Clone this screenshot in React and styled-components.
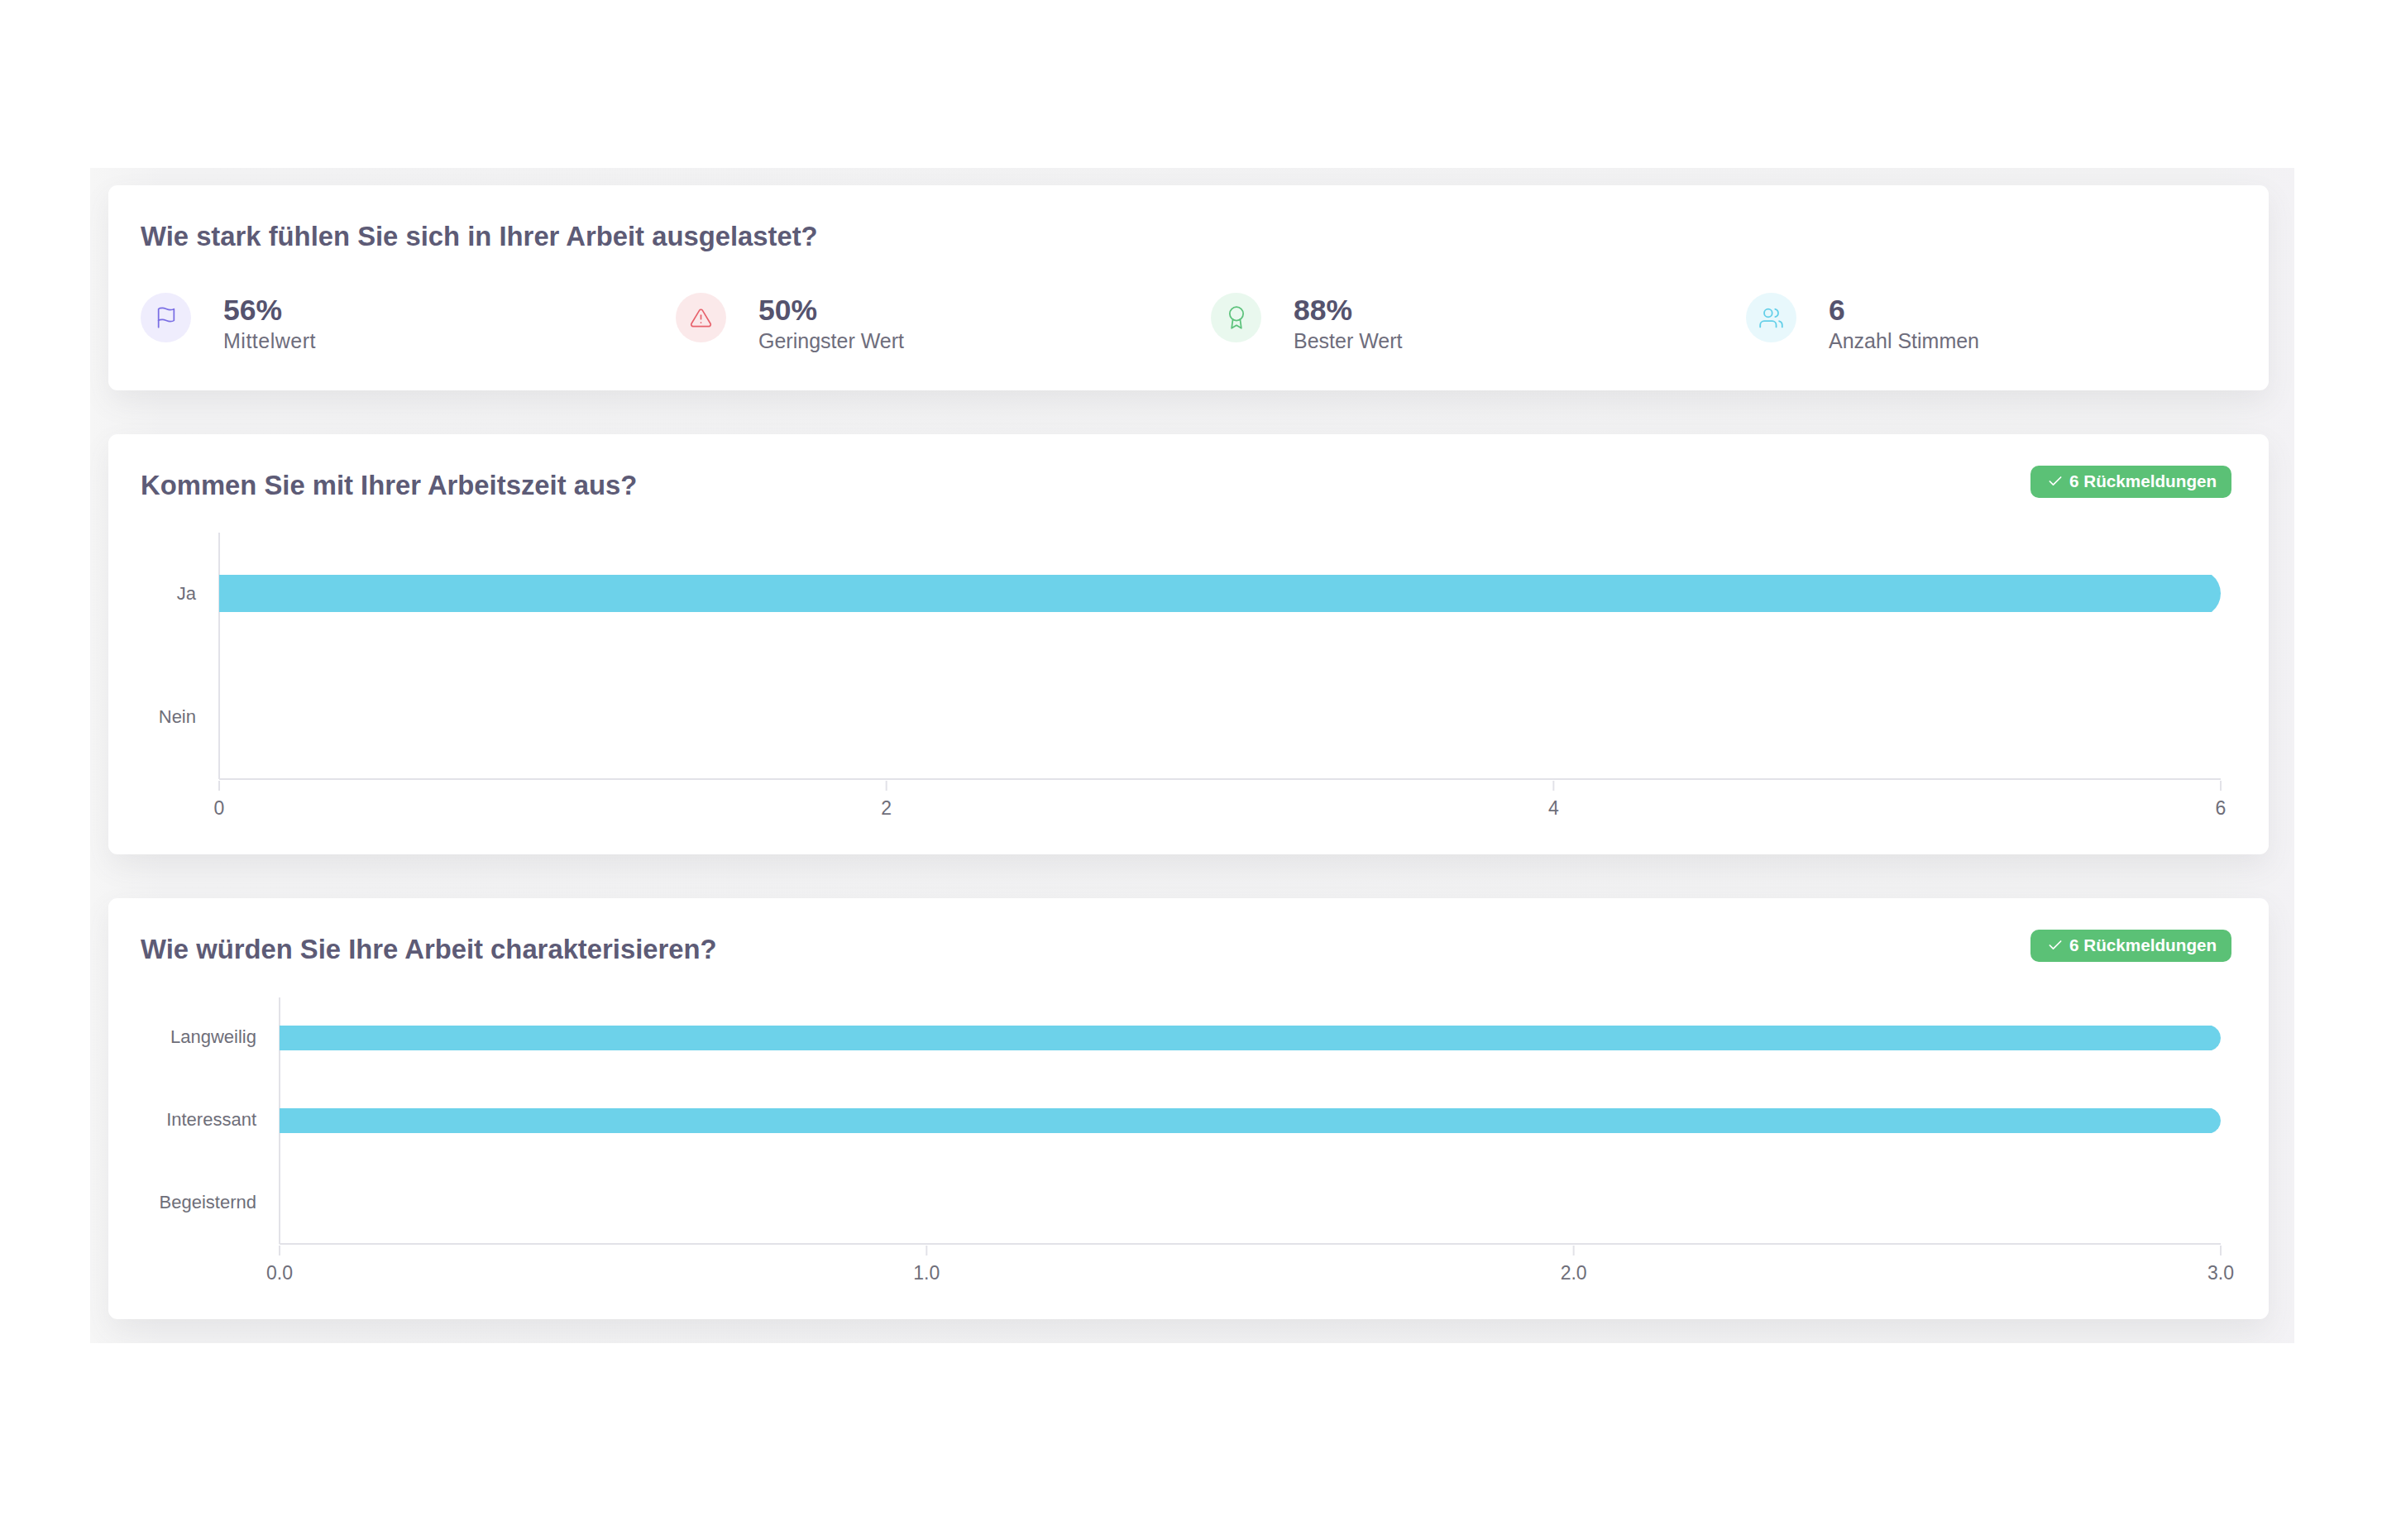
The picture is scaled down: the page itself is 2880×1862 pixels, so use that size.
import React from "react";
import styled, { createGlobalStyle } from "styled-components";
import { FiFlag, FiAlertTriangle, FiAward, FiUsers, FiCheck } from "react-icons/fi";

const Global = createGlobalStyle`
  html, body { margin: 0; padding: 0; background: #fff; }
  body { font-family: "Liberation Sans", Arial, sans-serif; -webkit-font-smoothing: antialiased; }
`;

const Page = styled.div`
  width: 2880px;
  height: 1862px;
  padding: 203px 106px 0 109px;
  box-sizing: border-box;
  background: #fff;
`;

const Panel = styled.main`
  height: 1421px;
  box-sizing: border-box;
  padding: 21px 31px 28px 22px;
  display: flex;
  flex-direction: column;
  gap: 53px;
  overflow: hidden;
  background: linear-gradient(to right, #f6f6f6 0, #f2f2f3 90px, #f1f1f2 96%, #f3f2f5 100%);
`;

const Card = styled.section`
  height: ${(p) => p.$height}px;
  flex: none;
  box-sizing: border-box;
  padding: 40px 45px 0 39px;
  background: #fff;
  border-radius: 11px;
  box-shadow: 0 14px 34px rgba(90, 90, 110, 0.085);
`;

const Header = styled.header`
  display: flex;
  align-items: flex-start;
  justify-content: space-between;
`;

const Title = styled.h2`
  margin: 0;
  font-size: 32.8px;
  line-height: 44px;
  font-weight: 700;
  color: #5d5b76;
`;

const Badge = styled.div`
  margin-top: -2px;
  width: 243px;
  height: 39px;
  box-sizing: border-box;
  padding: 0 0 2px 20px;
  display: flex;
  align-items: center;
  gap: 7px;
  border-radius: 10px;
  background: #5bc176;
  color: #fff;
  font-size: 20.7px;
  font-weight: 700;
  white-space: nowrap;
`;

const Stats = styled.div`
  margin-top: 46px;
  display: grid;
  grid-template-columns: repeat(4, 647px);
`;

const Stat = styled.div`
  display: flex;
  align-items: flex-start;
  gap: 39px;
`;

const IconCircle = styled.div`
  width: 61px;
  height: 60px;
  flex: none;
  display: flex;
  align-items: center;
  justify-content: center;
  border-radius: 50%;
  background: ${(p) => p.$bg};
  color: ${(p) => p.$fg};
`;

const StatText = styled.div`
  margin-top: 1px;
`;

const StatValue = styled.div`
  font-size: 35.5px;
  line-height: 40px;
  font-weight: 700;
  color: #55536e;
`;

const StatLabel = styled.div`
  font-size: 25px;
  line-height: 34px;
  color: #6e6d7c;
  letter-spacing: ${(p) => p.$track || 0}px;
`;

const ChartSvg = styled.svg`
  display: block;
  overflow: visible;
  margin-top: ${(p) => p.$top}px;
`;

const AxisLine = styled.line`
  stroke: #e2e2e8;
  stroke-width: 2;
`;

const BarShape = styled.path`
  fill: #6dd2ea;
`;

const AxisText = styled.text`
  font-family: "Liberation Sans", Arial, sans-serif;
  font-size: ${(p) => p.$size}px;
  fill: #6e6e79;
  dominant-baseline: central;
`;

function barPath(x0, x1, y, h) {
  const sag = 11;
  const r = ((h / 2) ** 2 + sag ** 2) / (2 * sag);
  return `M${x0} ${y}H${x1 - sag}A${r} ${r} 0 0 1 ${x1 - sag} ${y + h}H${x0}Z`;
}

function BarChart({ top, x0, x1, axisY, rows, ticks, barH }) {
  const tickGap = (x1 - x0) / (ticks.length - 1);
  return (
    <ChartSvg $top={top} width="2528" height={axisY + 60} viewBox={`0 0 2528 ${axisY + 60}`}>
      <AxisLine x1={x0} x2={x0} y1={0} y2={axisY} />
      <AxisLine x1={x0} x2={x1} y1={axisY} y2={axisY} />
      {ticks.map((t, i) => (
        <g key={t}>
          <AxisLine x1={x0 + tickGap * i} x2={x0 + tickGap * i} y1={axisY + 2} y2={axisY + 14} />
          <AxisText $size={23} x={x0 + tickGap * i} y={axisY + 35} textAnchor="middle">{t}</AxisText>
        </g>
      ))}
      {rows.map((r) => (
        <g key={r.label}>
          <AxisText $size={22} x={x0 - 28} y={r.labelY} textAnchor="end">{r.label}</AxisText>
          {r.full && <BarShape d={barPath(x0, x1, r.y, barH)} />}
        </g>
      ))}
    </ChartSvg>
  );
}

const STATS = [
  { value: "56%", label: "Mittelwert", track: 0.5, bg: "#efedfd", fg: "#7a6ee4", Icon: FiFlag, size: 28 },
  { value: "50%", label: "Geringster Wert", bg: "#fbe9ea", fg: "#e7626c", Icon: FiAlertTriangle, size: 27 },
  { value: "88%", label: "Bester Wert", bg: "#e9f8ee", fg: "#5cc27b", Icon: FiAward, size: 28 },
  { value: "6", label: "Anzahl Stimmen", bg: "#e8f8fc", fg: "#63cfe8", Icon: FiUsers, size: 29 },
];

const CheckedBadge = () => (
  <Badge>
    <FiCheck size={20} strokeWidth={2} />
    6 Rückmeldungen
  </Badge>
);

export default function App() {
  return (
    <Page>
      <Global />
      <Panel>
        <Card $height={248}>
          <Title>Wie stark fühlen Sie sich in Ihrer Arbeit ausgelastet?</Title>
          <Stats>
            {STATS.map(({ value, label, track, bg, fg, Icon, size }) => (
              <Stat key={label}>
                <IconCircle $bg={bg} $fg={fg}>
                  <Icon size={size} strokeWidth={1.5} />
                </IconCircle>
                <StatText>
                  <StatValue>{value}</StatValue>
                  <StatLabel $track={track}>{label}</StatLabel>
                </StatText>
              </Stat>
            ))}
          </Stats>
        </Card>
        <Card $height={508}>
          <Header>
            <Title>Kommen Sie mit Ihrer Arbeitszeit aus?</Title>
            <CheckedBadge />
          </Header>
          <BarChart
            top={35}
            x0={95}
            x1={2515}
            axisY={298}
            barH={45}
            ticks={["0", "2", "4", "6"]}
            rows={[
              { label: "Ja", labelY: 73, y: 51, full: true },
              { label: "Nein", labelY: 222 },
            ]}
          />
        </Card>
        <Card $height={509}>
          <Header>
            <Title>Wie würden Sie Ihre Arbeit charakterisieren?</Title>
            <CheckedBadge />
          </Header>
          <BarChart
            top={36}
            x0={168}
            x1={2515}
            axisY={298}
            barH={30}
            ticks={["0.0", "1.0", "2.0", "3.0"]}
            rows={[
              { label: "Langweilig", labelY: 47, y: 34, full: true },
              { label: "Interessant", labelY: 147, y: 134, full: true },
              { label: "Begeisternd", labelY: 247 },
            ]}
          />
        </Card>
      </Panel>
    </Page>
  );
}
